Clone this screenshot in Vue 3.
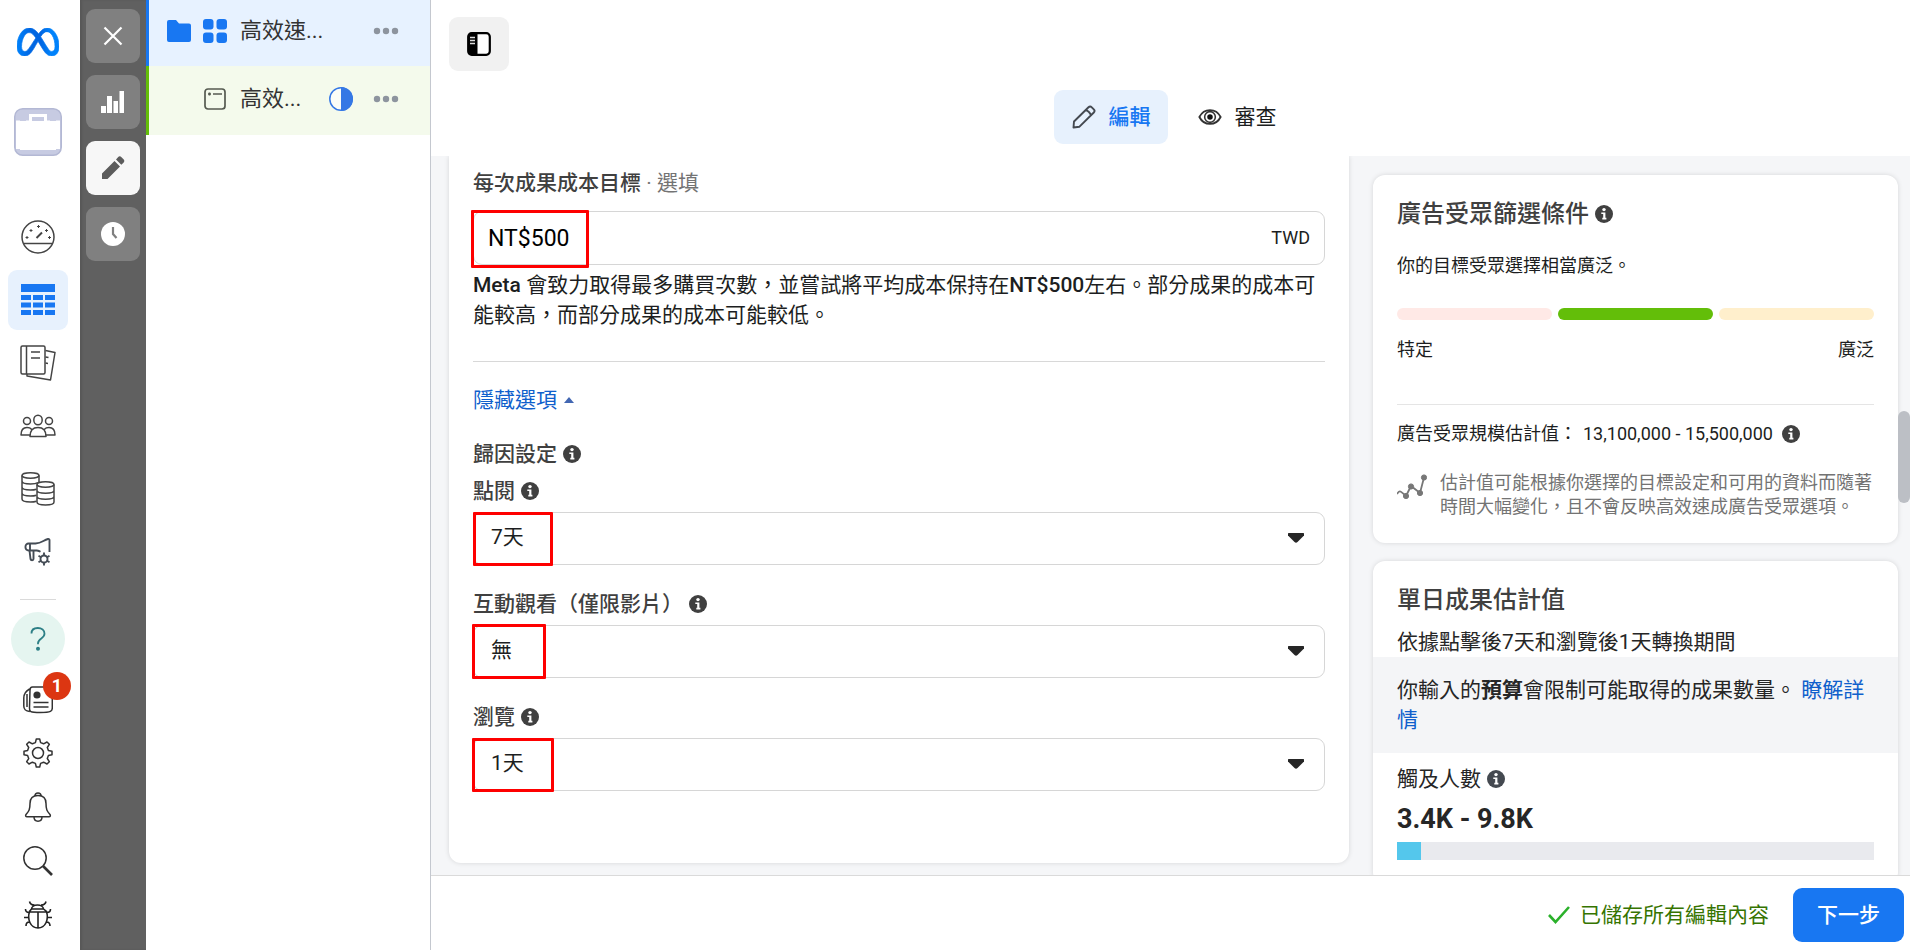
<script setup>
import { ref } from 'vue'

const target = ref('NT$500')
const attributions = ref([
  { id: 'click', label: '點閱', value: '7天', options: ['1天', '7天'], mark: 'mark-click' },
  { id: 'engaged', label: '互動觀看（僅限影片）', value: '無', options: ['無', '1天'], mark: 'mark-engaged' },
  { id: 'view', label: '瀏覽', value: '1天', options: ['無', '1天'], mark: 'mark-view' },
])
const reach = 5
</script>

<template>
  <div class="app">
    <svg class="defs" aria-hidden="true">
      <symbol id="info" viewBox="0 0 18 18">
        <circle cx="9" cy="9" r="9" fill="currentColor" />
        <circle cx="9" cy="4.6" r="1.7" fill="#fff" />
        <path d="M6.3 7.4h4.1v5.4h1v1.6H7.3v-1.6h.9V9H6.3z" fill="#fff" />
      </symbol>
      <symbol id="dots" viewBox="0 0 26 8">
        <circle cx="4" cy="4" r="3.2" fill="currentColor" />
        <circle cx="13" cy="4" r="3.2" fill="currentColor" />
        <circle cx="22" cy="4" r="3.2" fill="currentColor" />
      </symbol>
    </svg>

    <nav class="nav" aria-label="主選單">
      <a href="#" class="logo" aria-label="Meta">
        <svg width="42" height="28" viewBox="0 4 24 16">
          <defs>
            <linearGradient id="metaBlue" x1="0" x2="1" y1="0" y2="0">
              <stop offset="0" stop-color="#0082fb" />
              <stop offset=".3" stop-color="#0068e4" />
              <stop offset=".55" stop-color="#0064e0" />
              <stop offset=".8" stop-color="#0082fb" />
              <stop offset="1" stop-color="#0082fb" />
            </linearGradient>
          </defs>
          <path fill="url(#metaBlue)" stroke="url(#metaBlue)" stroke-width=".4" d="M6.915 4.03c-1.968 0-3.683 1.28-4.871 3.113C.704 9.208 0 11.883 0 14.449c0 .706.07 1.369.21 1.973a6.624 6.624 0 0 0 .265.86 5.297 5.297 0 0 0 .371.761c.696 1.159 1.818 1.927 3.593 1.927 1.497 0 2.633-.671 3.965-2.444.76-1.012 1.144-1.626 2.663-4.32l.756-1.339.186-.325c.061.1.121.196.183.3l2.152 3.595c.724 1.21 1.665 2.556 2.47 3.314 1.046.987 1.992 1.22 3.06 1.22 1.075 0 1.876-.355 2.455-.843a3.743 3.743 0 0 0 .81-.973c.542-.939.861-2.127.861-3.745 0-2.72-.681-5.357-2.084-7.45-1.282-1.912-2.957-2.93-4.716-2.93-1.047 0-2.088.467-3.053 1.308-.652.57-1.257 1.29-1.82 2.05-.69-.875-1.335-1.547-1.958-2.056-1.182-.966-2.315-1.303-3.454-1.303zm10.16 2.053c1.147 0 2.188.758 2.992 1.999 1.132 1.748 1.647 4.195 1.647 6.4 0 1.548-.368 2.9-1.839 2.9-.58 0-1.027-.23-1.664-1.004-.496-.601-1.343-1.878-2.832-4.358l-.617-1.028a44.908 44.908 0 0 0-1.255-1.98c.07-.109.141-.224.211-.327 1.12-1.667 2.118-2.602 3.358-2.602zm-10.201.553c1.265 0 2.058.791 2.675 1.446.307.327.737.871 1.234 1.579l-1.02 1.566c-.757 1.163-1.882 3.017-2.837 4.338-1.191 1.649-1.81 1.817-2.486 1.817-.524 0-1.038-.237-1.383-.794-.263-.426-.464-1.13-.464-2.046 0-2.221.63-4.535 1.66-6.088.454-.687.964-1.226 1.533-1.533a2.264 2.264 0 0 1 1.088-.285z" />
        </svg>
      </a>
      <a href="#" class="account" aria-label="企業帳號">
        <svg width="48" height="48" viewBox="0 0 48 48">
          <rect x=".75" y=".75" width="46.5" height="46.5" rx="8" fill="#c7cbe2" stroke="#b3b8d4" stroke-width="1.5" />
          <rect x="2" y="13" width="44" height="28" fill="#fff" />
          <path d="M16.5 14V7.500h15V14" fill="none" stroke="#fff" stroke-width="3" />
          <path d="M2 13.500h4M12 13.500h3M33 13.500h3M42 13.500h4M6 41h36" stroke="#fff" stroke-width="2" />
        </svg>
      </a>

      <div class="group tools">
        <a href="#" class="item" aria-label="總覽">
          <svg width="36" height="36" viewBox="0 0 36 36" fill="none" stroke="#444" stroke-width="1.5">
            <circle cx="18" cy="18" r="16" />
            <path d="M3.500 24.500h29" />
            <path d="M16.500 19l5.500-5.500" stroke-width="2" />
            <path d="M5.500 18.500h3M7 17v3M9.500 11.500h3M11 10v3M17 7.500h3M18.500 6v3M25 11.500h3M26.500 10v3M28 18.500h3M29.500 17v3" stroke-width="1" />
          </svg>
        </a>
        <a href="#" class="item active" aria-label="廣告活動" aria-current="page">
          <svg width="34" height="32" viewBox="0 0 34 32" fill="#1877f2">
            <path d="M0 0h34v8H0zM0 11h10v5H0zM12 11h10v5H12zM24 11h10v5H24zM0 18.500h10v5H0zM12 18.500h10v5H12zM24 18.500h10v5H24zM0 26h10v5H0zM12 26h10v5H12zM24 26h10v5H24z" />
          </svg>
        </a>
        <a href="#" class="item" aria-label="報告">
          <svg width="36" height="36" viewBox="0 0 36 36" fill="none" stroke="#444" stroke-width="1.5" stroke-linejoin="round">
            <rect x="1" y="1" width="24" height="28" rx="1.5" />
            <path d="M6.500 1v28M11 7h9M11 13h9M25.500 5.500L35 7.500l-4.500 27.500L7 31v-2M25.500 12l3 .6M25.500 18l2.500.5" />
          </svg>
        </a>
        <a href="#" class="item" aria-label="廣告受眾">
          <svg width="36" height="24" viewBox="0 0 36 24" fill="none" stroke="#444" stroke-width="1.5" stroke-linejoin="round">
            <ellipse cx="18" cy="6" rx="4.200" ry="4.800" />
            <circle cx="7" cy="7" r="3.500" />
            <circle cx="29" cy="7" r="3.500" />
            <path d="M10 22.500c0-6 2-9 8-9s8 3 8 9zM10 21H1c0-5 2-7.500 6-7.500 2 0 3.500.5 4.500 1.700M26 21h9c0-5-2-7.500-6-7.500-2 0-3.500.5-4.500 1.700" />
          </svg>
        </a>
        <a href="#" class="item" aria-label="帳單">
          <svg width="34" height="34" viewBox="0 0 34 34" fill="none" stroke="#444" stroke-width="1.5">
            <ellipse cx="9.500" cy="3.500" rx="8.500" ry="2.700" />
            <path d="M1 3.500V27c0 2 4 3 8.500 3 2.500 0 4.500-.3 6-.8M18 3.500V10M1 9c0 2 4 3 8.500 3 3 0 6-.5 7.500-1.500M1 15c0 2 4 3 8.500 3 2.500 0 4.500-.3 6-.8M1 21c0 2 4 3 8.500 3 2.500 0 4.500-.3 6-.8" />
            <ellipse cx="24.500" cy="12.500" rx="8.500" ry="2.700" />
            <path d="M16 12.500V30c0 4 17 4 17 0V12.500M16 18.500c0 3.500 17 3.500 17 0M16 24.500c0 3.500 17 3.500 17 0" />
          </svg>
        </a>
        <a href="#" class="item" aria-label="廣告設定">
          <svg width="30" height="30" viewBox="0 0 30 30" fill="none" stroke="#444c55" stroke-width="1.9" stroke-linejoin="round">
            <path d="M14 13.500H5.500A3 3 0 0 1 2.500 10.500V9.500A3 3 0 0 1 5.500 6.500h7C19 6 20 3.500 25 2c1-.3 1.500.3 1.500 1V15M7 6.500v7M14 13.500c2 .3 2.500.6 3.500 1.200M6.500 13.500l1 8.500c.3 1.600 3 1.600 3 0v-8.500" />
            <circle cx="21" cy="22" r="3.500" />
            <path d="M21 15.500v3M21 25.500v3M15.500 18.800l2.500 1.500M24 23.700l2.500 1.500M15.500 25.200l2.500-1.500M24 20.300l2.500-1.500" />
          </svg>
        </a>
      </div>

      <hr class="nav-rule" />

      <div class="group utils">
        <button type="button" class="help" aria-label="說明">
          <svg width="18" height="26" viewBox="0 0 18 26" fill="none" stroke="#2d7f86" stroke-width="1.800">
            <path d="M2.500 7.500C2.500 3.800 5 2 8.800 2s6.700 2.200 6.700 5.800c0 5-6.500 4.200-6.500 9.500v1" />
            <circle cx="9" cy="22.800" r="1.100" fill="#2d7f86" />
          </svg>
        </button>
        <button type="button" class="util news" aria-label="最新消息">
          <svg width="30" height="30" viewBox="0 0 30 30" fill="none" stroke="#333" stroke-width="1.500">
            <path d="M7 6c0-2 .5-3 2.500-3H27c1.500 0 2.300 1 2.300 2.500V24c0 3-1 4.500-12 4.500S6.500 27.500 6.500 24zM6.500 5C3 7 .8 9 .8 14v8c0 4 2 5 6 5.500M4 10v13" />
            <circle cx="14" cy="11" r="3.600" fill="#333" stroke="none" />
            <path d="M10.500 18.500h15M10.500 23h15" />
          </svg>
          <span class="badge">1</span>
        </button>
        <button type="button" class="util" aria-label="設定">
          <svg width="30" height="30" viewBox="0 0 30 30" fill="none" stroke="#333" stroke-width="1.500" stroke-linejoin="round">
            <path d="M13.300 1h3.400l.9 3.600 3 1.200L24 4l2.300 2.300-2 3.200 1.100 2.900 3.600.9v3.400l-3.600.9-1.100 2.900 2 3.200L24 26l-3.400-1.800-3 1.200-.9 3.600h-3.400l-.9-3.600-3-1.200L6 26l-2.300-2.300 2-3.100-1.100-3L1 16.700v-3.400l3.600-.9 1.100-2.900-2-3.200L6 4l3.400 1.800 3-1.200z" />
            <circle cx="15" cy="15" r="5.500" />
          </svg>
        </button>
        <button type="button" class="util" aria-label="通知">
          <svg width="30" height="30" viewBox="0 0 30 30" fill="none" stroke="#333" stroke-width="1.500" stroke-linejoin="round">
            <path d="M12 4c0-4 6-4 6 0M15 3.500c-5 0-8 3-8 8 0 6-1 7.500-4 11-.8 1.200-.2 2.300 1 2.300h22c1.200 0 1.800-1.100 1-2.300-3-3.500-4-5-4-11 0-5-3-8-8-8zM11 25c0 5.500 8 5.500 8 0" />
          </svg>
        </button>
        <button type="button" class="util" aria-label="搜尋">
          <svg width="30" height="30" viewBox="0 0 30 30" fill="none" stroke="#333" stroke-width="1.500">
            <circle cx="12" cy="12" r="11.200" />
            <path d="M20 20l9 9" stroke-width="2.600" />
          </svg>
        </button>
        <button type="button" class="util" aria-label="回報問題">
          <svg width="30" height="30" viewBox="0 0 30 30" fill="none" stroke="#222" stroke-width="1.600">
            <path d="M6.500 12h17M15 12v16M8.500 9.500c0-6 12-6 12 0M6.500 11.500c-2.500 8 1 16.500 8.500 16.500s11-8.500 8.500-16.500l-3-2.500h-12zM6.500 1.500c.5 2.500 2 3.500 5 3.500M23 1.500c-.5 2.500-2 3.500-5 3.500M6 12.500C3.500 12.500 2.500 11 2.500 9M24 12.500c2.500 0 3.500-1.500 3.500-3.500M5.500 17.500H1M24.500 17.500H29M6.500 22c-2.500 0-3.500 1.500-3.500 4M23.500 22c2.500 0 3.500 1.500 3.500 4" />
          </svg>
        </button>
      </div>
    </nav>

    <aside class="rail" aria-label="編輯工具">
      <button type="button" class="rail-btn" aria-label="關閉">
        <svg width="20" height="20" viewBox="0 0 20 20" stroke="#fff" stroke-width="2.200"><path d="M1.500 1.500l17 17M18.500 1.500l-17 17" /></svg>
      </button>
      <button type="button" class="rail-btn" aria-label="圖表">
        <svg width="24" height="22" viewBox="0 0 24 22" fill="#fff"><path d="M0 15h5v7H0zM6 5h5v17H6zM12.500 10h4.500v12h-4.500zM18.500 0H23v22h-4.500z" /></svg>
      </button>
      <button type="button" class="rail-btn on" aria-label="編輯">
        <svg width="24" height="24" viewBox="0 0 24 24" fill="#5c5c5c"><path d="M1 17.500L13.500 5l5.500 5.500L6.500 23H1zM15 3.500l2-2.300c1.200-1.300 2.500-.9 3.500 0l2 2c1 1 1.200 2.300 0 3.500l-2.200 2z" /></svg>
      </button>
      <button type="button" class="rail-btn" aria-label="紀錄">
        <svg width="24" height="24" viewBox="0 0 24 24"><circle cx="12" cy="12" r="12" fill="#fff" /><path d="M12 5v7l3.500 4" fill="none" stroke="#808080" stroke-width="2.200" /></svg>
      </button>
    </aside>

    <section class="tree" aria-label="廣告活動結構">
      <div class="row campaign">
        <svg width="24" height="22" viewBox="0 0 24 22" fill="#1877f2"><path d="M0 2a2 2 0 0 1 2-2h7l3 3.500h10a2 2 0 0 1 2 2V20a2 2 0 0 1-2 2H2a2 2 0 0 1-2-2z" /></svg>
        <svg class="second" width="24" height="24" viewBox="0 0 24 24" fill="#1877f2">
          <rect width="10.500" height="10.500" rx="3" /><rect x="13.500" width="10.500" height="10.500" rx="3" />
          <rect y="13.500" width="10.500" height="10.500" rx="3" /><rect x="13.500" y="13.500" width="10.500" height="10.500" rx="3" />
        </svg>
        <span class="name">高效速...</span>
        <button type="button" class="more" aria-label="更多選項"><svg width="26" height="8"><use href="#dots" /></svg></button>
      </div>
      <div class="row ad">
        <svg class="second" width="24" height="24" viewBox="0 0 24 24" fill="none" stroke="#555a50" stroke-width="1.700">
          <rect x="2" y="2" width="20" height="20" rx="3" /><path d="M10 7h9M5 7h3M6.500 5.500v3" />
        </svg>
        <span class="name">高效...</span>
        <svg class="half" width="24" height="24" viewBox="0 0 24 24"><circle cx="12" cy="12" r="11.200" fill="#fff" fill-opacity=".6" stroke="#3578e5" stroke-width="1.500" /><path d="M12 0a12 12 0 0 1 0 24z" fill="#3578e5" /></svg>
        <button type="button" class="more" aria-label="更多選項"><svg width="26" height="8"><use href="#dots" /></svg></button>
      </div>
    </section>

    <main class="main">
      <header class="head">
        <button type="button" class="toggle" aria-label="切換側邊欄">
          <svg width="24" height="24" viewBox="0 0 24 24">
            <rect x="1.200" y="1.200" width="21.600" height="21.600" rx="3.500" fill="#fff" stroke="#000" stroke-width="2.200" />
            <path d="M1 4a3 3 0 0 1 3-3h6.500v22H4a3 3 0 0 1-3-3z" />
            <path d="M3 5.500h5M3 8.500h5M3 11.500h5" stroke="#ddd" stroke-width="1.300" />
          </svg>
        </button>
        <div class="tabs">
          <button type="button" class="tab current">
            <svg width="24" height="24" viewBox="0 0 24 24" fill="none" stroke="#444950" stroke-width="1.900" stroke-linejoin="round"><path d="M1.500 22.500l.5-6L16.500 2.300c1-1 2.300-1 3.300 0l2 2c.9.9.9 2.200 0 3.200L7.500 21.700zM13.500 5.300c2 0 5.300 2.700 5.300 5.300" /></svg>
            <span>編輯</span>
          </button>
          <button type="button" class="tab">
            <svg width="24" height="18" viewBox="0 0 26 18"><path d="M1.500 9c5-10 18-10 23 0-5 10-18 10-23 0z" fill="#fff" stroke="#333" stroke-width="2" /><circle cx="13" cy="9" r="5.800" fill="#fff" stroke="#333" stroke-width="1.700" /><circle cx="13" cy="9" r="3" fill="#111" /></svg>
            <span>審查</span>
          </button>
        </div>
      </header>

      <div class="content">
        <section class="card form">
          <label class="label" for="target">每次成果成本目標<span class="optional"> · 選填</span></label>
          <div class="field money">
            <input id="target" v-model="target" type="text" />
            <span class="unit">TWD</span>
            <i class="mark mark-target"></i>
          </div>
          <p class="hint"><b>Meta</b> 會致力取得最多購買次數，並嘗試將平均成本保持在<b>NT$500</b>左右。部分成果的成本可能較高，而部分成果的成本可能較低。</p>
          <hr class="rule" />
          <a href="#" class="collapse">隱藏選項<svg width="10" height="6" viewBox="0 0 10 6"><path d="M5 0l5 6H0z" fill="#4267b2" /></svg></a>
          <h2 class="label attribution">歸因設定<svg class="info"><use href="#info" /></svg></h2>
          <div v-for="a in attributions" :key="a.id" class="setting">
            <label class="label" :for="a.id">{{ a.label }}<svg class="info"><use href="#info" /></svg></label>
            <div class="field">
              <select :id="a.id" v-model="a.value">
                <option v-for="o in a.options" :key="o">{{ o }}</option>
              </select>
              <svg class="caret" width="16" height="10" viewBox="0 0 16 10"><path d="M.8 0h14.400c.6 0 .8.4.8 1v1.500L9.500 9c-1 .9-2 .9-3 0L0 2.500V1C0 .4.200 0 .8 0z" fill="#262626" /></svg>
              <i class="mark" :class="a.mark"></i>
            </div>
          </div>
        </section>

        <div class="side">
          <section class="card audience">
            <h2 class="title">廣告受眾篩選條件<svg class="info"><use href="#info" /></svg></h2>
            <p class="summary">你的目標受眾選擇相當廣泛。</p>
            <div class="meter"><i class="narrow"></i><i class="good"></i><i class="broad"></i></div>
            <div class="ends"><span>特定</span><span>廣泛</span></div>
            <hr class="rule light" />
            <p class="size"><span>廣告受眾規模估計值：</span><span>13,100,000 - 15,500,000</span><svg class="info"><use href="#info" /></svg></p>
            <div class="note">
              <svg width="30" height="26" viewBox="0 0 30 26" fill="#777" stroke="#777"><path d="M0 20c3-5 4-2 9 2l5-10 9 7L27 3.500" fill="none" stroke-width="1.800" /><circle cx="9" cy="22" r="2.600" /><circle cx="14" cy="12.500" r="2.600" /><circle cx="23" cy="19" r="2.600" /><circle cx="27" cy="3.500" r="2.600" /></svg>
              <p>估計值可能根據你選擇的目標設定和可用的資料而隨著時間大幅變化，且不會反映高效速成廣告受眾選項。</p>
            </div>
          </section>

          <section class="card results">
            <h2 class="title">單日成果估計值</h2>
            <p class="basis">依據點擊後7天和瀏覽後1天轉換期間</p>
            <p class="banner">你輸入的<strong>預算</strong>會限制可能取得的成果數量。 <a href="#">瞭解詳情</a></p>
            <p class="metric">觸及人數<svg class="info slate"><use href="#info" /></svg></p>
            <p class="figure">3.4K - 9.8K</p>
            <div class="bar"><i :style="{ width: reach + '%' }"></i></div>
          </section>
        </div>
        <i class="thumb"></i>
      </div>

      <footer class="foot">
        <svg width="22" height="18" viewBox="0 0 22 18" fill="none" stroke="#2bb12b" stroke-width="2.600"><path d="M1 9l6.500 7L21 1" /></svg>
        <span class="saved">已儲存所有編輯內容</span>
        <button type="button" class="next">下一步</button>
      </footer>
    </main>
  </div>
</template>

<style>
body {
  margin: 0;
}
</style>

<style scoped>
.app {
  display: flex;
  height: 100vh;
  overflow: hidden;
  background: #fff;
  color: #1c1e21;
  font-family: Roboto, "Noto Sans CJK TC", sans-serif;
  font-size: 21px;
  line-height: 30px;
}
.app * { box-sizing: border-box; }
.defs { position: absolute; width: 0; height: 0; }
svg { flex: none; display: block; }
p, h2, hr { margin: 0; font-size: inherit; font-weight: inherit; }
hr { border: 0; height: 1px; }
b { font-weight: 500; }
a { color: #0f60cc; text-decoration: none; }
button, input, select {
  margin: 0;
  padding: 0;
  border: 0;
  background: none;
  color: inherit;
  font: inherit;
}

/* Navigation */
.nav {
  width: 80px;
  flex: none;
  display: flex;
  flex-direction: column;
  align-items: center;
  padding: 28px 4px 8px 0;
}
.account { margin-top: 52px; }
.group { display: flex; flex-direction: column; align-items: center; }
.tools { margin-top: 51px; gap: 3px; }
.item {
  width: 60px;
  height: 60px;
  display: grid;
  place-items: center;
  border-radius: 9px;
}
.item.active { background: #e7f1fd; }
.nav-rule { width: 36px; margin-top: 17px; background: #dadada; }
.utils { margin-top: 12px; }
.help {
  width: 54px;
  height: 54px;
  display: grid;
  place-items: center;
  margin-bottom: 6px;
  border-radius: 50%;
  background: #e5f5f0;
}
.util {
  position: relative;
  width: 54px;
  height: 54px;
  display: grid;
  place-items: center;
}
.badge {
  position: absolute;
  top: 0;
  right: -6px;
  width: 28px;
  height: 28px;
  border-radius: 50%;
  background: #dc3612;
  color: #fff;
  font-size: 18px;
  font-weight: 700;
  line-height: 28px;
}

/* Tool rail */
.rail {
  width: 66px;
  flex: none;
  display: flex;
  flex-direction: column;
  align-items: center;
  gap: 12px;
  padding-top: 9px;
  background: #606060;
  box-shadow: inset 2px 0 2px #585858;
}
.rail-btn {
  width: 54px;
  height: 54px;
  display: grid;
  place-items: center;
  border-radius: 9px;
  background: #808080;
}
.rail-btn.on { background: #f7f7f7; }

/* Campaign tree */
.tree { width: 285px; flex: none; border-right: 1px solid #c4c8cf; }
.row {
  display: flex;
  align-items: center;
  padding-right: 31px;
  border-left: 3px solid;
}
.campaign { height: 66px; padding-left: 18px; padding-bottom: 5px; background: #e7f2ff; border-color: #1877f2; }
.ad { height: 69px; padding-left: 54px; padding-bottom: 3px; background: #f4faec; border-color: #63be09; }
.campaign .second { margin-left: 12px; }
.name { margin-left: 13px; margin-right: auto; font-size: 22px; color: #333; }
.half { margin-right: 20px; }
.more { color: #8d949e; display: flex; }

/* Header */
.main { flex: 1; min-width: 0; display: flex; flex-direction: column; }
.head {
  height: 156px;
  flex: none;
  display: flex;
  flex-direction: column;
  gap: 19px;
  padding: 17px 18px 12px;
}
.toggle {
  width: 60px;
  height: 54px;
  display: grid;
  place-items: center;
  border-radius: 9px;
  background: #f1f1f1;
}
.tabs { display: flex; justify-content: center; gap: 12px; padding-left: 6px; }
.tab {
  height: 54px;
  display: flex;
  align-items: center;
  gap: 13px;
  padding: 0 17px 0 18px;
  border-radius: 9px;
}
.tab.current { background: #e7f1fd; color: #1877f2; font-weight: 500; }

/* Content */
.content {
  position: relative;
  flex: 1;
  min-height: 0;
  display: grid;
  grid-template-columns: 12fr 7fr;
  grid-template-rows: 100%;
  gap: 24px;
  padding: 0 12px 0 18px;
  overflow: hidden;
  background: #f5f6f8;
}
.card { background: #fff; border-radius: 12px; box-shadow: 0 0 5px rgba(0, 0, 0, .13); }
.form { margin-bottom: 12px; padding: 12px 24px; border-radius: 0 0 12px 12px; }
.label { display: flex; align-items: center; color: #404040; font-weight: 500; }
.optional { color: #737373; font-weight: 400; white-space: pre; }
.info { width: 18px; height: 18px; margin-left: 6px; color: #404040; }
.info.slate { color: #444950; }
.field {
  position: relative;
  display: flex;
  align-items: center;
  height: 54px;
  border: 1px solid #d6d6d6;
  border-radius: 9px;
}
.money { margin-top: 13px; }
.money input { flex: 1; min-width: 0; height: 100%; padding-left: 14px; border-radius: 9px; color: #000; font-size: 23px; }
.unit { padding-right: 14px; font-size: 18px; }
.field select {
  flex: 1;
  height: 100%;
  padding: 0 17px 3px;
  appearance: none;
  border-radius: 9px;
}
.caret { position: absolute; right: 20px; top: 20px; pointer-events: none; }
.mark { position: absolute; left: -2px; top: -1px; height: 54px; border: 3px solid #fe0000; border-radius: 1px; pointer-events: none; }
.mark-target { width: 118px; height: 58px; left: -3px; top: -2px; }
.mark-click { width: 80px; left: -1px; }
.mark-engaged { width: 74px; top: -2px; height: 55px; }
.mark-view { width: 82px; }
.hint { margin-top: 5px; }
.rule { margin-top: 31px; background: #d8d8d8; }
.collapse { display: inline-flex; align-items: center; gap: 7px; margin-top: 23px; }
.attribution { margin-top: 24px; margin-bottom: 7px; }
.setting { margin-bottom: 24px; }
.setting .field { height: 53px; margin-top: 6px; }

/* Estimates */
.side { min-width: 0; padding-top: 19px; display: flex; flex-direction: column; gap: 18px; }
.side .card { flex: none; padding: 21px 24px 24px; }
.title { display: flex; align-items: center; color: #404040; font-size: 24px; font-weight: 500; line-height: 36px; }
.audience { font-size: 18px; line-height: 24px; }
.summary { margin-top: 22px; }
.meter { display: flex; gap: 6px; margin-top: 30px; }
.meter i { flex: 1; height: 12px; border-radius: 6px; }
.narrow { background: #ffe9e6; }
.good { background: #63be09; }
.broad { background: #ffefcc; }
.ends { display: flex; justify-content: space-between; margin-top: 18px; }
.rule.light { margin-top: 42px; background: #e5e5e5; }
.size { display: flex; align-items: center; gap: 6px; margin-top: 17px; }
.size .info { margin-left: 3px; }
.note { display: flex; gap: 13px; margin-top: 25px; color: #737373; }
.note svg { margin-top: 3px; }
.results { color: #262626; }
.basis { margin-top: 9px; }
.banner { margin: 0 -24px; padding: 18px 24px; background: #f4f5f7; }
.metric { display: flex; align-items: center; margin-top: 11px; }
.figure { margin-top: 7px; font-size: 27px; font-weight: 700; line-height: 36px; }
.bar { height: 18px; margin-top: 5px; background: #e9eaee; }
.bar i { display: block; height: 100%; background: #54c7ec; }
.thumb { position: absolute; right: 0; top: 255px; width: 12px; height: 92px; border-radius: 6px; background: #bcbfc5; }

/* Footer */
.foot {
  height: 75px;
  flex: none;
  display: flex;
  align-items: center;
  justify-content: flex-end;
  padding-top: 3px;
  padding-right: 6px;
  border-top: 1px solid #dadada;
}
.saved { margin: 0 24px 0 10px; color: #367400; }
.next { height: 54px; padding: 0 24px; border-radius: 9px; background: #1877f2; color: #fff; font-weight: 500; }
</style>
